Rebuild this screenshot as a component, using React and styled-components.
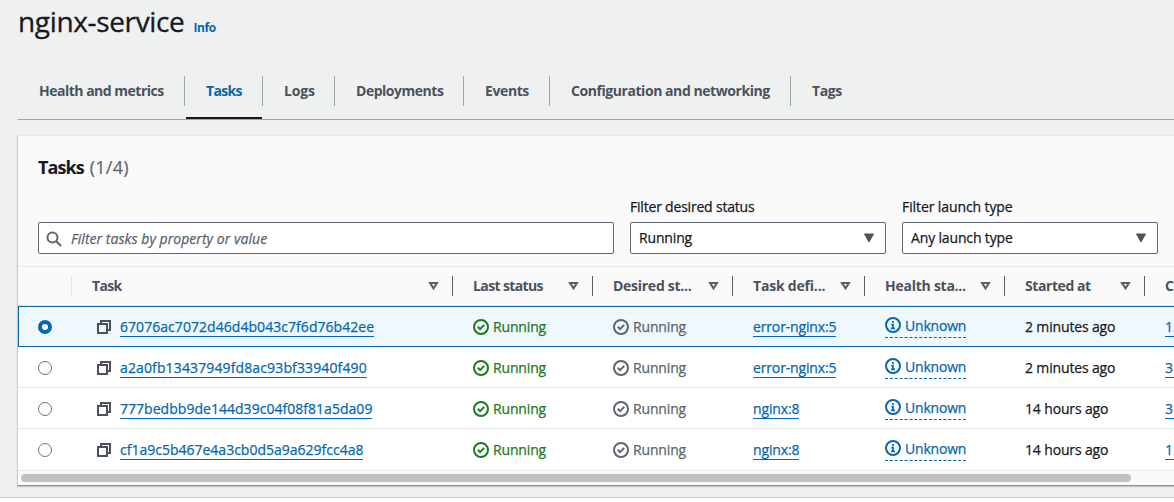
import React from "react";
import styled, { createGlobalStyle, css } from "styled-components";

const Global = createGlobalStyle`
  *, *::before, *::after { box-sizing: border-box; }
  html, body { margin: 0; height: 100%; background: #fff; overflow: hidden; }
  body {
    font-family: "Open Sans", "Noto Sans", sans-serif;
    font-size: 14px;
    line-height: 22px;
    color: #16191f;
    -webkit-font-smoothing: antialiased;
  }
`;

const Page = styled.main`
  width: 1174px;
  height: 498px;
  padding-left: 18px;
  background: #eff1f0;
  border-bottom: 1px solid #c4c6c6;
  overflow: hidden;
`;

const Text = styled.span`
  letter-spacing: ${(p) => p.$track ?? -0.15}px;
  -webkit-text-stroke: ${(p) => (p.$bold ? 0 : 0.25)}px currentColor;
  white-space: nowrap;
`;

const TitleBar = styled.header`
  display: flex;
  align-items: baseline;
  gap: 9px;
  height: 76px;
  padding-top: 3px;
`;

const Title = styled.h1`
  margin: 0;
  font-size: 28px;
  line-height: 36px;
  font-weight: 400;
  letter-spacing: -0.35px;
  -webkit-text-stroke: 0.3px currentColor;
`;

const InfoLink = styled.a`
  font-size: 12px;
  font-weight: 700;
  color: #0467b0;
  letter-spacing: -0.4px;
`;

const Tabs = styled.nav`
  display: flex;
  width: 1156px;
  height: 44px;
  border-bottom: 1px solid #99a8a6;
`;

const Tab = styled.div`
  display: flex;
  flex: none;
  flex-direction: column;
  justify-content: space-between;
  width: ${(p) => p.$width}px;
  font-weight: 700;
  color: ${(p) => (p.$active ? "#0467b0" : "#4a525d")};
  &::after {
    content: "";
    height: 2px;
    margin: 0 1px;
    background: ${(p) => (p.$active ? "#16191f" : "transparent")};
  }
`;

const TabLabel = styled.div`
  height: 30px;
  padding: 4px 0 0 21px;
  border-right: 1px solid ${(p) => (p.$last ? "transparent" : "#99a8a6")};
`;

const Panel = styled.section`
  width: 1200px;
  height: 351px;
  margin: 15px 0 0 -1px;
  background: #fafafa;
  border: 1px solid #c9cccc;
  border-top-color: #e6e8e8;
  border-bottom-color: #8b9696;
  box-shadow: 0 1px 1px rgba(0, 28, 36, 0.2);
`;

const PanelTitle = styled.h2`
  display: flex;
  gap: 6px;
  margin: 0;
  padding: 20px 20px 0;
  font-size: 18px;
  line-height: 22px;
  font-weight: 700;
`;

const Count = styled.span`
  font-weight: 400;
  color: #5d6570;
  letter-spacing: 0.2px;
  -webkit-text-stroke: 0.2px currentColor;
`;

const Filters = styled.div`
  display: flex;
  align-items: flex-end;
  gap: 16px;
  height: 76px;
  padding-left: 20px;
`;

const Field = styled.div`
  display: flex;
  flex-direction: column;
  gap: 4px;
  width: ${(p) => p.$width}px;
`;

const Control = styled.div`
  display: flex;
  align-items: center;
  justify-content: space-between;
  height: 32px;
  padding: 0 ${(p) => (p.$search ? 7 : 10)}px 0 ${(p) => (p.$search ? 7 : 8)}px;
  background: #fff;
  border: 1px solid #5d6673;
  border-radius: 2px;
  ${(p) => p.$search && css`
    justify-content: flex-start;
    gap: 9px;
    color: #5a626e;
    font-style: italic;
    padding-top: 2px;
  `}
`;

const Table = styled.div`
  margin-top: 12px;
  border-top: 1px solid #e6e9e9;
`;

const Row = styled.div`
  display: grid;
  grid-template-columns: 54px 381px 140px 140px 132px 140px 140px 80px;
  align-items: center;
  height: 41px;
  padding-top: 1px;
  background: #fff;
  border-bottom: 1px solid #e6e9e9;
  &:nth-last-child(2) { height: 42px; padding-bottom: 1px; }
  ${(p) => p.$selected && css`
    background: #f0f8ff;
    border: 1px solid #0467a8;
    border-right: 0;
    padding-top: 0;
    grid-template-columns: 53px 381px 140px 140px 132px 140px 140px 80px;
  `}
`;

const HeadRow = styled(Row)`
  height: 39px;
  padding-top: 0;
  background: #fafafa;
  color: #4a525d;
  font-weight: 700;
`;

const HeadCell = styled.div`
  display: flex;
  align-items: center;
  justify-content: space-between;
  height: 20px;
  padding: 0 13px 0 20px;
  border-right: 1px solid ${(p) => (p.$faint ? "#e2e5e5" : "#59616c")};
`;

const Cell = styled.div`
  display: flex;
  align-items: center;
  gap: ${(p) => p.$gap || 4}px;
  height: 22px;
  padding-left: ${(p) => p.$indent || 20}px;
  color: ${(p) => p.$color || "inherit"};
`;

const Link = styled.a`
  height: 20px;
  min-width: ${(p) => p.$min || 0}px;
  line-height: 19px;
  color: #0467b0;
  border-bottom: 1px solid #0467b0;
  letter-spacing: ${(p) => p.$track ?? -0.15}px;
  -webkit-text-stroke: 0.25px currentColor;
  white-space: nowrap;
`;

const Popover = styled.span`
  display: flex;
  align-items: center;
  gap: 4px;
  height: 22px;
  padding-bottom: 2px;
  line-height: 19px;
  color: #0467b0;
  border-bottom: 1px dashed #0467b0;
`;

const Radio = styled.span`
  width: 14px;
  height: 14px;
  background: #fff;
  border: ${(p) => (p.$on ? "4px solid #0467b0" : "1px solid #69727d")};
  border-radius: 50%;
`;

const ScrollTrack = styled.div`
  display: flex;
  align-items: center;
  height: 14px;
  padding-left: 3px;
`;

const ScrollThumb = styled.div`
  width: 1110px;
  height: 8px;
  border-radius: 4px;
  background: #c1c1c1;
`;

const SearchIcon = () => (
  <svg width="16" height="16" viewBox="0 0 16 16" fill="none" stroke="#5d6673" strokeWidth="2">
    <circle cx="6.5" cy="6.5" r="5" />
    <path d="M10.2 10.2 15 15" />
  </svg>
);

const CaretFilled = () => (
  <svg width="12" height="10" viewBox="0 0 12 10">
    <path d="M1.5 1h9L6 9z" fill="#4a525d" stroke="#4a525d" strokeLinejoin="round" />
  </svg>
);

const CaretOutline = () => (
  <svg width="11" height="10" viewBox="0 0 11 10" fill="none" stroke="#59616c" strokeWidth="2">
    <path d="M2 1.9h7L5.5 7.3z" />
  </svg>
);

const CopyIcon = () => (
  <svg width="16" height="16" viewBox="0 0 16 16" fill="none" stroke="#4a525d" strokeWidth="2">
    <path d="M2 5h9v9H2z" />
    <path d="M5 5V2h9v9h-3" />
  </svg>
);

const CheckIcon = () => (
  <svg width="16" height="16" viewBox="0 0 16 16" fill="none" stroke="currentColor" strokeWidth="2">
    <circle cx="8" cy="8" r="7" />
    <path d="m4.8 7.8 2.3 2.3 4.1-4.2" />
  </svg>
);

const InfoIcon = () => (
  <svg width="16" height="16" viewBox="0 0 16 16" fill="none" stroke="currentColor" strokeWidth="2">
    <circle cx="8" cy="8" r="7" />
    <path d="M8 4v2M6.3 7.6H8v3.6M6 11.4h4" strokeWidth="1.7" />
  </svg>
);

const TABS = [
  { label: "Health and metrics", width: 167, track: -0.5 },
  { label: "Tasks", width: 78, active: true, track: -0.7 },
  { label: "Logs", width: 72, track: -0.2 },
  { label: "Deployments", width: 129, track: -0.48 },
  { label: "Events", width: 86, track: -0.4 },
  { label: "Configuration and networking", width: 241, track: -0.44 },
  { label: "Tags", width: 90, last: true, track: -0.4 },
];

const HEADS = [
  { label: "Task", track: -0.7 },
  { label: "Last status", track: -0.62 },
  { label: "Desired st...", track: -0.27 },
  { label: "Task defi...", track: -0.2 },
  { label: "Health sta...", track: -0.25 },
  { label: "Started at", track: -0.42 },
];

const ROWS = [
  { id: "67076ac7072d46d4b043c7f6d76b42ee", track: 0.05, def: "error-nginx:5", at: "2 minutes ago", next: "1.", on: true },
  { id: "a2a0fb13437949fd8ac93bf33940f490", track: 0.13, def: "error-nginx:5", at: "2 minutes ago", next: "3" },
  { id: "777bedbb9de144d39c04f08f81a5da09", track: 0.03, def: "nginx:8", at: "14 hours ago", next: "3" },
  { id: "cf1a9c5b467e4a3cb0d5a9a629fcc4a8", track: 0, def: "nginx:8", at: "14 hours ago", next: "1." },
];

export default function App() {
  return (
    <>
      <Global />
      <Page>
        <TitleBar>
          <Title>nginx-service</Title>
          <InfoLink>Info</InfoLink>
        </TitleBar>
        <Tabs>
          {TABS.map((t) => (
            <Tab key={t.label} $width={t.width} $active={t.active}>
              <TabLabel $last={t.last}><Text $bold $track={t.track}>{t.label}</Text></TabLabel>
            </Tab>
          ))}
        </Tabs>
        <Panel>
          <PanelTitle>
            <Text $bold $track={-0.9}>Tasks</Text>
            <Count>(1/4)</Count>
          </PanelTitle>
          <Filters>
            <Field $width={576}>
              <Control $search>
                <SearchIcon />
                <Text $track={0.05}>Filter tasks by property or value</Text>
              </Control>
            </Field>
            <Field $width={256}>
              <Text $track={-0.2}>Filter desired status</Text>
              <Control><Text>Running</Text><CaretFilled /></Control>
            </Field>
            <Field $width={256}>
              <Text $track={-0.1}>Filter launch type</Text>
              <Control><Text>Any launch type</Text><CaretFilled /></Control>
            </Field>
          </Filters>
          <Table>
            <HeadRow>
              <HeadCell $faint />
              {HEADS.map((h) => (
                <HeadCell key={h.label}><Text $bold $track={h.track}>{h.label}</Text><CaretOutline /></HeadCell>
              ))}
              <Cell>Containers</Cell>
            </HeadRow>
            {ROWS.map((r) => (
              <Row key={r.id} $selected={r.on}>
                <Cell $indent={r.on ? 19 : 20}><Radio $on={r.on} /></Cell>
                <Cell $indent={24} $gap={8}><CopyIcon /><Link $track={r.track}>{r.id}</Link></Cell>
                <Cell $color="#1d7a1d"><CheckIcon /><Text>Running</Text></Cell>
                <Cell $color="#5d6570"><CheckIcon /><Text>Running</Text></Cell>
                <Cell><Link>{r.def}</Link></Cell>
                <Cell><Popover><InfoIcon /><Text $track={-0.2}>Unknown</Text></Popover></Cell>
                <Cell><Text>{r.at}</Text></Cell>
                <Cell><Link $min={40}>{r.next}</Link></Cell>
              </Row>
            ))}
            <ScrollTrack><ScrollThumb /></ScrollTrack>
          </Table>
        </Panel>
      </Page>
    </>
  );
}
